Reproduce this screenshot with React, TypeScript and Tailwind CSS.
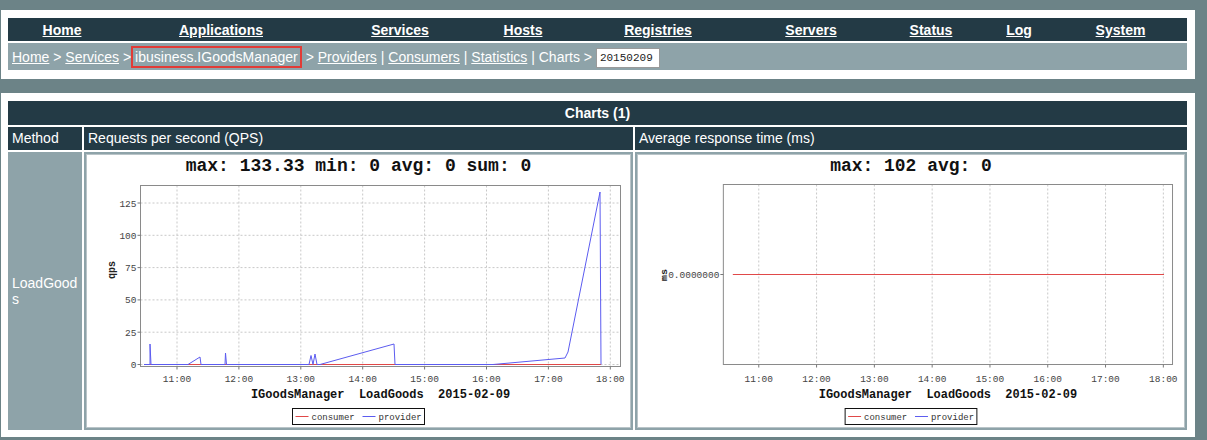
import React from "react";

const MONO = "'Liberation Mono', 'DejaVu Sans Mono', monospace";

type Plot = { x0: number; x1: number; y0: number; y1: number };
type Tick = { y: number; label: string };

type ChartProps = {
  box: [number, number, number, number];
  title: string;
  plot: Plot;
  xGrid: number[];
  yTicks: Tick[];
  hGrid?: boolean;
  yName: string;
  yNameAt: [number, number];
  children?: React.ReactNode;
};

const HOURS = ["11:00", "12:00", "13:00", "14:00", "15:00", "16:00", "17:00", "18:00"];

const Chart: React.FC<ChartProps> = ({
  box,
  title,
  plot,
  xGrid,
  yTicks,
  hGrid,
  yName,
  yNameAt,
  children,
}) => {
  const [bx, by, bw, bh] = box;
  const cx = bx + bw / 2;
  const px = (plot.x0 + plot.x1) / 2;

  return (
    <svg
      viewBox={`${bx} ${by} ${bw} ${bh}`}
      preserveAspectRatio="none"
      className="block w-full h-full"
      fontFamily={MONO}
    >
      <rect x={bx} y={by} width={bw} height={bh} fill="#fff" />
      <text x={cx} y={171} textAnchor="middle" fontSize={18} fontWeight="bold" fill="#111">
        {title}
      </text>

      {/* grid */}
      {xGrid.map((x) => (
        <line key={x} x1={x} x2={x} y1={plot.y0} y2={plot.y1} stroke="#c8c8c8" strokeDasharray="2 2" />
      ))}
      {hGrid &&
        yTicks.map((t) => (
          <line key={t.label} x1={plot.x0} x2={plot.x1} y1={t.y} y2={t.y} stroke="#c8c8c8" strokeDasharray="2 2" />
        ))}
      <rect
        x={plot.x0}
        y={plot.y0}
        width={plot.x1 - plot.x0}
        height={plot.y1 - plot.y0}
        fill="none"
        stroke="#8a8a8a"
      />

      {/* y axis */}
      {yTicks.map((t) => (
        <g key={t.label}>
          <line x1={plot.x0 - 3} x2={plot.x0} y1={t.y} y2={t.y} stroke="#777" />
          <text x={plot.x0 - 4} y={t.y + 3.5} textAnchor="end" fontSize={9.5} fill="#444">
            {t.label}
          </text>
        </g>
      ))}
      <text
        x={yNameAt[0]}
        y={yNameAt[1] + 4}
        transform={`rotate(-90 ${yNameAt[0]} ${yNameAt[1]})`}
        textAnchor="middle"
        fontSize={10}
        fontWeight="bold"
        fill="#222"
      >
        {yName}
      </text>

      {/* x axis */}
      {xGrid.map((x, i) => (
        <g key={x}>
          <line x1={x} x2={x} y1={plot.y1} y2={plot.y1 + 3} stroke="#777" />
          <text x={x} y={382} textAnchor="middle" fontSize={9.5} fill="#444">
            {HOURS[i]}
          </text>
        </g>
      ))}
      <text x={px} y={398} textAnchor="middle" fontSize={12} fontWeight="bold" fill="#111" xmlSpace="preserve">
        {"IGoodsManager  LoadGoods  2015-02-09"}
      </text>

      {children}

      {/* legend */}
      <rect x={cx - 66} y={408.5} width={132} height={16} fill="#fff" stroke="#111" />
      <line x1={cx - 63} x2={cx - 50} y1={416.5} y2={416.5} stroke="#e04848" />
      <text x={cx - 47} y={420} fontSize={9} fill="#333">
        consumer
      </text>
      <line x1={cx + 4} x2={cx + 17} y1={416.5} y2={416.5} stroke="#5c5cf0" />
      <text x={cx + 20} y={420} fontSize={9} fill="#333">
        provider
      </text>
    </svg>
  );
};

const NAV = [
  "Home",
  "Applications",
  "Services",
  "Hosts",
  "Registries",
  "Servers",
  "Status",
  "Log",
  "System",
];

export default function App() {
  const qpsGrid = HOURS.map((_, i) => 177 + i * 61.9);
  const rtGrid = HOURS.map((_, i) => 759 + i * 57.9);
  const qpsTicks: Tick[] = ["0", "25", "50", "75", "100", "125"].map((label, i) => ({
    label,
    y: 364.5 - i * 32.3,
  }));

  return (
    <div className="min-h-[440px] w-full overflow-hidden bg-[#6c8387] pt-[10px] font-['Liberation_Sans',Arial,sans-serif] text-[14px] text-white">
      {/* top menu */}
      <div className="ml-[1px] w-[1194px] bg-white pb-[9px] pl-[7px] pr-[8px] pt-[8px]">
        <div className="grid h-[23px] grid-cols-[108px_210px_148px_98px_172px_134px_106px_70px_133px] items-center bg-[#233a45] pt-[2px]">
          {NAV.map((n) => (
            <a key={n} href="#" className="text-center font-bold underline">
              {n}
            </a>
          ))}
        </div>
        <div className="mt-[2px] flex h-[27px] items-center bg-[#8ea3a9] pl-[4px] pt-[1px]">
          <span className="whitespace-pre">
            <a href="#" className="underline">Home</a>
            {" > "}
            <a href="#" className="underline">Services</a>
            {" >"}
            <span className="inline-block border-2 border-[#e23b36] px-[2px] leading-[18px]">
              ibusiness.IGoodsManager
            </span>
            {" > "}
            <a href="#" className="underline">Providers</a>
            {" | "}
            <a href="#" className="underline">Consumers</a>
            {" | "}
            <a href="#" className="underline">Statistics</a>
            {" | Charts > "}
            <input
              readOnly
              value="20150209"
              className="inline-block h-[20px] w-[64px] border border-[#9a9a9a] bg-white pl-[3px] align-middle font-['Liberation_Mono',monospace] text-[11px] text-[#222] outline-none"
            />
          </span>
        </div>
      </div>

      {/* charts table */}
      <div className="ml-[1px] mt-[14px] w-[1194px] bg-white pb-[7px] pl-[7px] pr-[8px] pt-[8px]">
        <div className="flex h-[24px] items-center justify-center bg-[#233a45] font-bold">Charts (1)</div>
        <div className="mt-[2px] grid grid-cols-[74px_549px_552px] gap-[2px]">
          <div className="flex h-[23px] items-center bg-[#233a45] pl-[4px]">Method</div>
          <div className="flex h-[23px] items-center bg-[#233a45] pl-[4px]">Requests per second (QPS)</div>
          <div className="flex h-[23px] items-center bg-[#233a45] pl-[4px]">Average response time (ms)</div>

          <div className="flex h-[278px] items-center break-all bg-[#8ea3a9] px-[4px] leading-[16px]">
            LoadGoods
          </div>
          <div className="h-[278px] bg-[#8ea3a9] p-[2px]">
            <div className="h-full border border-[#b9c4c8] bg-white">
              <Chart
                box={[87, 155, 543, 272]}
                title="max: 133.33 min: 0 avg: 0 sum: 0"
                plot={{ x0: 140.5, x1: 620.5, y0: 185.5, y1: 366.5 }}
                xGrid={qpsGrid}
                yTicks={qpsTicks}
                hGrid
                yName="qps"
                yNameAt={[111, 270]}
              >
                <line x1={144} x2={601} y1={364.5} y2={364.5} stroke="#e04848" />
                <path
                  d="M144 364.5 L150 364.5 L150 344 L151 364.5 L188 364.5 L200 357 L201 364.5 L225 364.5 L225.5 353 L226.5 364.5 L309 364.5 L311 355.5 L313 364.5 L315 354 L317 364.5 L320 364.5 L394 344 L395 364.5 L493 364.5 L565 358 L568 352 L600 192 L601 364.5"
                  fill="none"
                  stroke="#5c5cf0"
                  strokeWidth={1}
                />
              </Chart>
            </div>
          </div>
          <div className="h-[278px] bg-[#8ea3a9] p-[2px]">
            <div className="h-full border border-[#b9c4c8] bg-white">
              <Chart
                box={[638, 155, 547, 272]}
                title="max: 102 avg: 0"
                plot={{ x0: 723.5, x1: 1173.5, y0: 184.5, y1: 364.5 }}
                xGrid={rtGrid}
                yTicks={[{ y: 274.5, label: "0.0000000" }]}
                yName="ms"
                yNameAt={[663, 275]}
              >
                <line x1={733} x2={1165} y1={274.5} y2={274.5} stroke="#e04848" />
              </Chart>
            </div>
          </div>
        </div>
      </div>
    </div>
  );
}
